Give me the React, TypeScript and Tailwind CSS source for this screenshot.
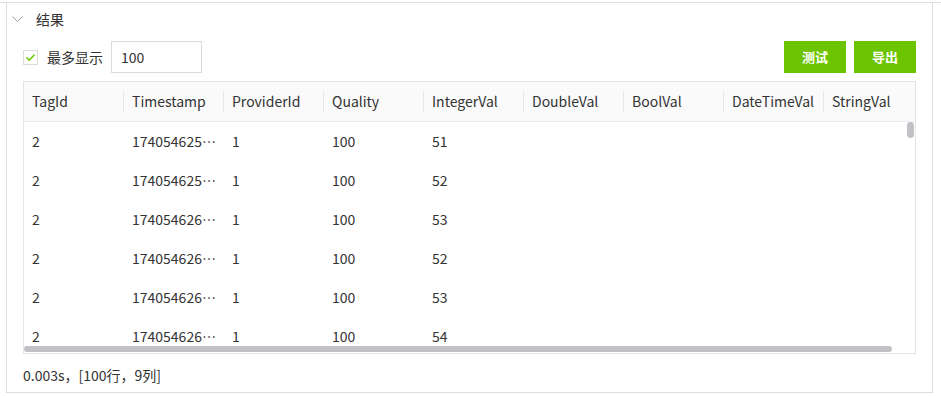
import React from "react";

const cols = ["TagId", "Timestamp", "ProviderId", "Quality", "IntegerVal", "DoubleVal", "BoolVal", "DateTimeVal", "StringVal"];
const rows = [
  ["2", "1740546251234", "1", "100", "51"],
  ["2", "1740546252234", "1", "100", "52"],
  ["2", "1740546263234", "1", "100", "53"],
  ["2", "1740546264234", "1", "100", "52"],
  ["2", "1740546265234", "1", "100", "53"],
  ["2", "1740546266234", "1", "100", "54"],
];

export default function App() {
  return (
    <div
      className="w-[941px] h-[396px] bg-white text-[#333] text-[14px]"
      style={{ fontFamily: '"Noto Sans CJK SC", "Noto Sans", sans-serif' }}
    >
      <div className="pt-[2px]">
        <div className="h-px bg-[#dddddd] w-full" />
        <div className="ml-[6px] w-[927px] h-[390px] border-x border-b border-[#dddddd] flex flex-col">
          <div className="h-[32px] flex items-center pl-[5px]">
            <svg width="11" height="7" viewBox="0 0 11 7" className="mt-[1px]">
              <polyline points="0.5,0.5 5.5,5.5 10.5,0.5" fill="none" stroke="#a0a0a0" strokeWidth="1" />
            </svg>
            <span className="ml-[13px] leading-none">结果</span>
          </div>
          <div className="mt-[6px] h-[32px] px-4 flex items-center">
            <div className="w-[15px] h-[15px] border border-[#dcdcdc] flex items-center justify-center">
              <svg width="11" height="9" viewBox="0 0 11 9">
                <polyline points="1.5,4.5 4.2,7.2 9.5,1.8" fill="none" stroke="#6cc400" strokeWidth="1.6" />
              </svg>
            </div>
            <span className="ml-[9px]">最多显示</span>
            <div className="ml-[8px] w-[91px] h-[32px] border border-[#dcdcdc] flex items-center pl-[9px]">100</div>
            <div className="ml-auto flex gap-2">
              <button className="w-[62px] h-[32px] bg-[#6cc400] text-white text-[13px] font-bold">测试</button>
              <button className="w-[62px] h-[32px] bg-[#6cc400] text-white text-[13px] font-bold">导出</button>
            </div>
          </div>
          <div className="mt-[8px] mx-4 h-[273px] border border-[#e4e4e4] relative overflow-hidden">
            <div className="flex h-[40px] bg-[#fafafa] border-b border-[#ececec]">
              {cols.map((c, i) => (
                <div key={c} className="w-[100px] shrink-0 flex items-center">
                  <span className="pl-[8px]">{c}</span>
                  {i < cols.length - 1 && <div className="ml-auto w-px h-[22px] bg-[#e6e6e6]" />}
                </div>
              ))}
            </div>
            {rows.map((r, ri) => (
              <div key={ri} className="flex h-[39px] items-center">
                {cols.map((c, ci) => (
                  <div key={c} className="w-[100px] shrink-0 px-[8px] truncate">
                    {r[ci] ?? ""}
                  </div>
                ))}
              </div>
            ))}
            <div className="absolute right-[1px] top-[40px] w-[7px] h-[16px] rounded-full bg-[#c0c2c6]" />
            <div className="absolute left-0 bottom-[1px] w-[868px] h-[6px] rounded-full bg-[#c0c2c6]" />
          </div>
          <div className="px-4 pt-[11px] text-[14px] leading-[20px]">0.003s，[100行，9列]</div>
        </div>
      </div>
    </div>
  );
}
